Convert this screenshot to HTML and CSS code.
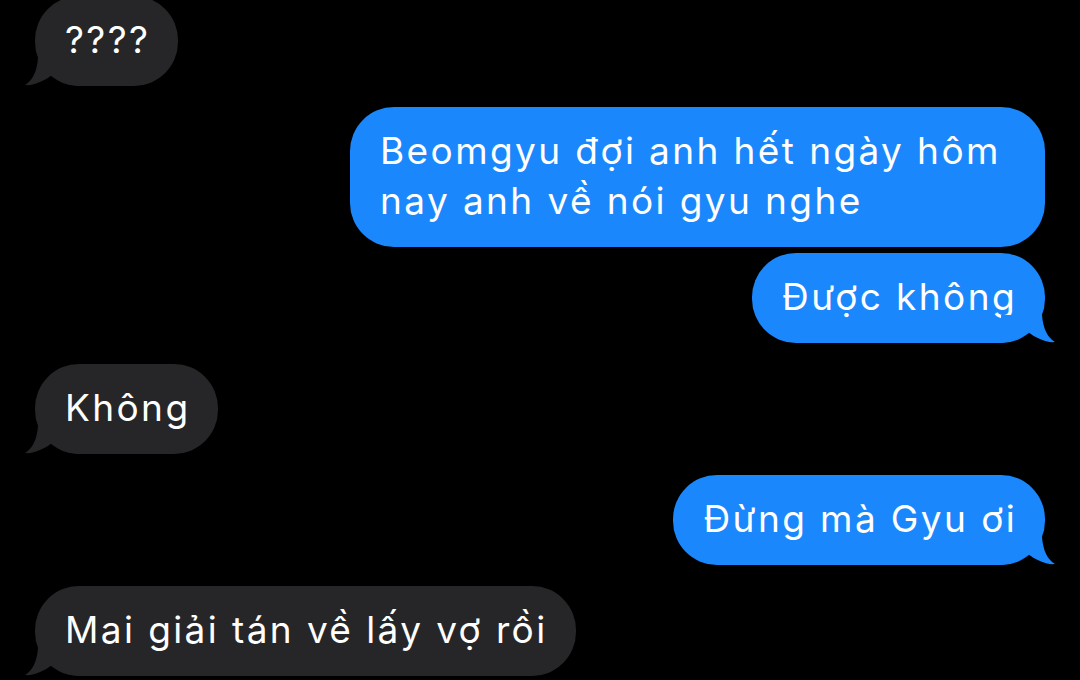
FILE: index.html
```html
<!DOCTYPE html>
<html lang="vi">

<head>
    <meta charset="UTF-8">
    <title>Tin nhắn</title>
    <link rel="stylesheet" href="styles.css">
</head>

<body>
    <main class="thread">
        <div class="bubble in first">
            ????
            <svg class="tail" viewBox="0 0 56 40"><path d="M13 12C12 26 7 35 0 39C9 40 19 35 27 29C33 35 42 39 54 40L54 12Z"/></svg>
        </div>

        <div class="bubble out">
            Beomgyu đợi anh hết ngày hôm nay anh về nói gyu nghe
        </div>
        <div class="bubble out grouped">
            Được không
            <svg class="tail" viewBox="0 0 56 40"><path d="M13 12C12 26 7 35 0 39C9 40 19 35 27 29C33 35 42 39 54 40L54 12Z"/></svg>
        </div>

        <div class="bubble in">
            Không
            <svg class="tail" viewBox="0 0 56 40"><path d="M13 12C12 26 7 35 0 39C9 40 19 35 27 29C33 35 42 39 54 40L54 12Z"/></svg>
        </div>

        <div class="bubble out">
            Đừng mà Gyu ơi
            <svg class="tail" viewBox="0 0 56 40"><path d="M13 12C12 26 7 35 0 39C9 40 19 35 27 29C33 35 42 39 54 40L54 12Z"/></svg>
        </div>

        <div class="bubble in">
            Mai giải tán về lấy vợ rồi
            <svg class="tail" viewBox="0 0 56 40"><path d="M13 12C12 26 7 35 0 39C9 40 19 35 27 29C33 35 42 39 54 40L54 12Z"/></svg>
        </div>
    </main>
</body>

</html>
```

FILE: styles.css
```css
:root {
    --blue: #1a87fc;
    --gray: #262628;
    --radius: 44px;
}

* {
    margin: 0;
    padding: 0;
    box-sizing: border-box;
}

body {
    width: 1080px;
    height: 680px;
    background: #000;
    color: #fff;
    font-family: Inter, "Open Sans", "Liberation Sans", sans-serif;
    font-variant-ligatures: none;
    font-feature-settings: "calt" 0;
    overflow: hidden;
}

.thread {
    display: flex;
    flex-direction: column;
    padding: 0 35px;
}

.bubble {
    position: relative;
    max-width: 695px;
    margin-top: 21px;
    padding: 19px 28px 21px 30px;
    border-radius: var(--radius);
    font-size: 37px;
    line-height: 50px;
    letter-spacing: 2.4px;
}

.bubble.first {
    margin-top: -4px;
}

.bubble.grouped {
    margin-top: 6px;
}

.in {
    align-self: flex-start;
    background: var(--gray);
}

.out {
    align-self: flex-end;
    background: var(--blue);
}

.tail {
    position: absolute;
    bottom: 0;
    width: 56px;
    height: 40px;
}

.in .tail {
    left: -10px;
    fill: var(--gray);
}

.out .tail {
    right: -10px;
    fill: var(--blue);
    transform: scaleX(-1);
}
```
